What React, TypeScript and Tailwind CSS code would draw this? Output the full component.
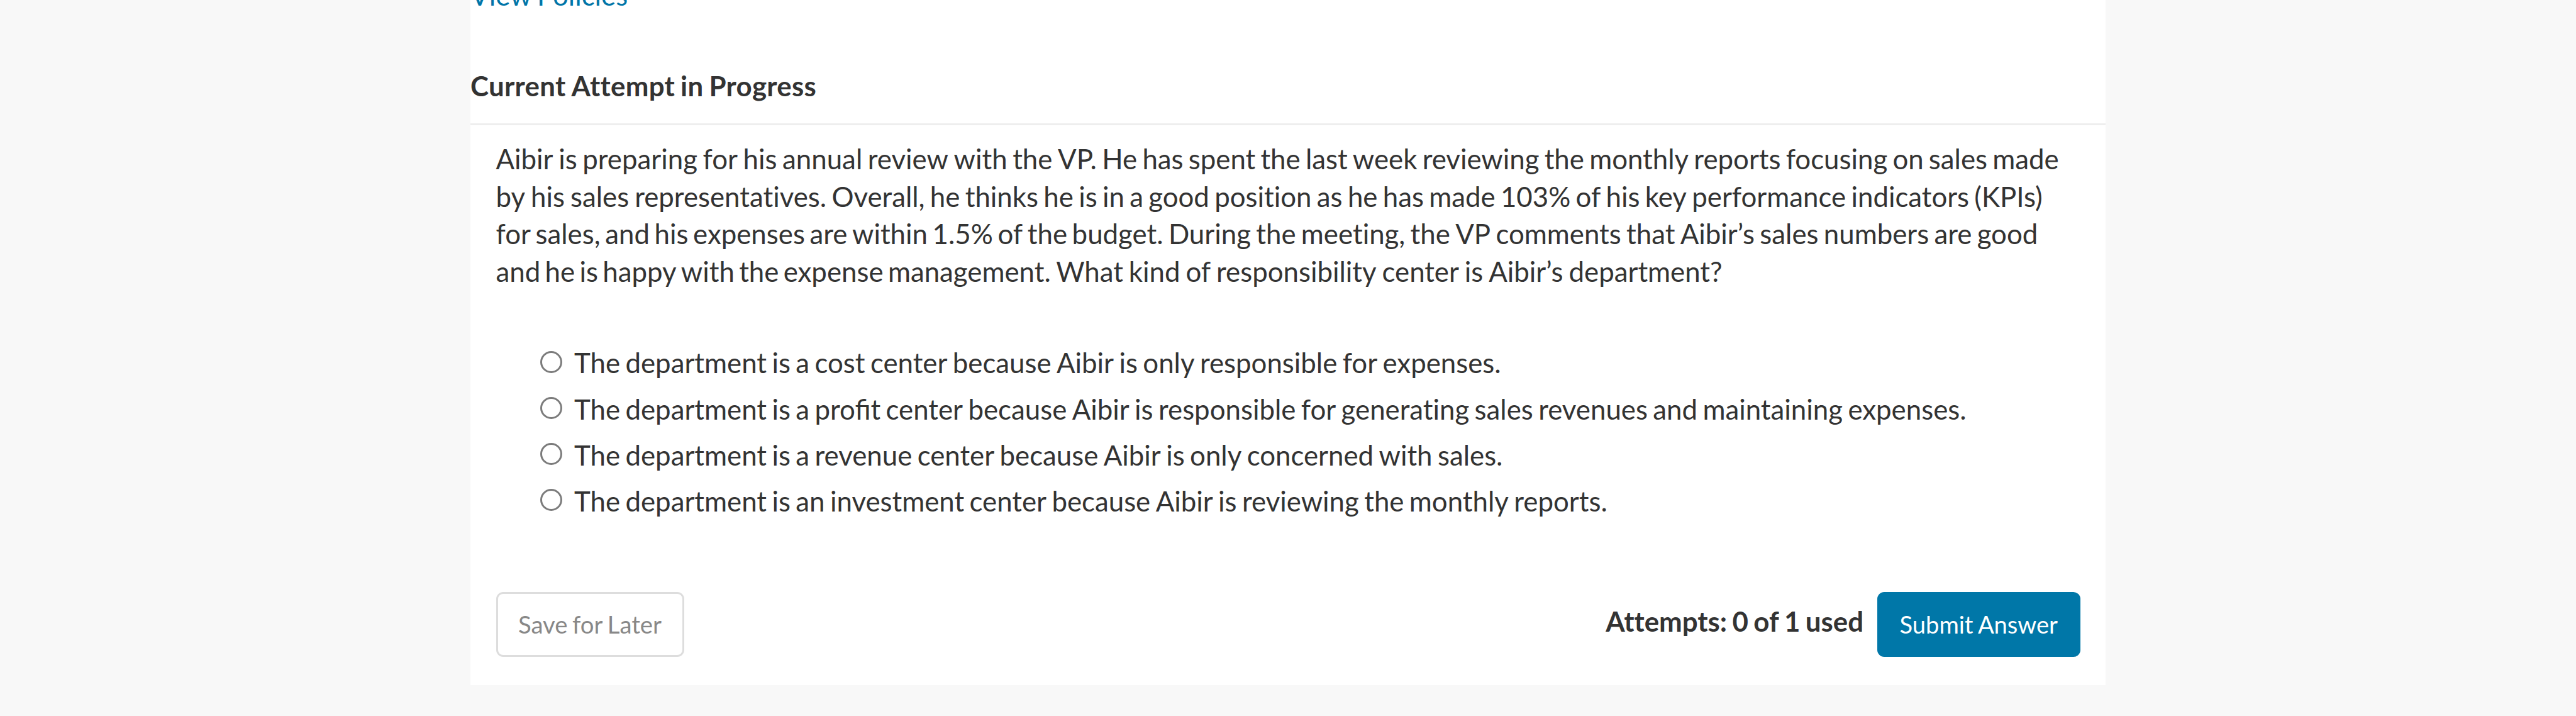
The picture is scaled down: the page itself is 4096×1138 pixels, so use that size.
import clsx from "clsx";

const paragraph = [
  [
    { text: "Aibir is preparing for his annual review with the VP.", gap: "gap-[8.6px]" },
    { text: "He has spent the last week reviewing the monthly reports focusing on sales made", gap: "gap-[8.2px]" },
  ],
  [
    { text: "by his sales representatives.", gap: "gap-[9px]" },
    { text: "Overall, he thinks he is in a good position as he has made 103% of his key performance indicators (KPIs)", gap: "gap-[8.3px]" },
  ],
  [
    { text: "for sales, and his expenses are within 1.5% of the budget.", gap: "gap-[7.6px]" },
    { text: "During the meeting, the VP comments that Aibir’s sales numbers are good", gap: "gap-[8.3px]" },
  ],
  [
    { text: "and he is happy with the expense management.", gap: "gap-[7.3px]" },
    { text: "What kind of responsibility center is Aibir’s department?", gap: "gap-[8.9px]" },
  ],
];

const options = [
  "The department is a cost center because Aibir is only responsible for expenses.",
  "The department is a profit center because Aibir is responsible for generating sales revenues and maintaining expenses.",
  "The department is a revenue center because Aibir is only concerned with sales.",
  "The department is an investment center because Aibir is reviewing the monthly reports.",
];

function Words({ text, gap = "gap-[8.4px]" }: { text: string; gap?: string }) {
  return (
    <span className={clsx("flex", gap)}>
      {text.split(" ").map((word, i) => (
        <span
          key={i}
          className={clsx(word === "profit" && "[font-variant-ligatures:normal]")}
        >
          {word}
        </span>
      ))}
    </span>
  );
}

export default function App() {
  return (
    <div className="flex h-[1138px] w-[4096px] justify-center overflow-hidden bg-[#f8f8f8] font-[Lato,sans-serif] text-[43.8px] leading-[60px] whitespace-nowrap text-[#333333] [font-variant-ligatures:none]">
      <main className="h-[1089px] w-[2600px] bg-white">
        <a href="#" className="-mt-[38px] block h-[60px] text-[#0075a8]">
          <Words text="View Policies" />
        </a>
        <h2 className="flex h-[177px] items-end border-b-[3px] border-[#eeeeee] pb-[30px] font-bold tracking-[0.3px]">
          <Words text="Current Attempt in Progress" gap="gap-[9px]" />
        </h2>
        <div className="px-[40.5px] pt-[24px]">
          <div className="leading-[59.7px]">
            {paragraph.map((line, i) => (
              <p key={i} className="flex gap-[8.4px]">
                {line.map((sentence) => (
                  <Words key={sentence.text} {...sentence} />
                ))}
              </p>
            ))}
          </div>
          <div className="mt-[78px] pl-[70.5px]">
            {options.map((option) => (
              <label key={option} className="flex h-[73.15px] items-center">
                <input
                  type="radio"
                  name="answer"
                  className="mr-[19px] mb-[2px] size-[35px] appearance-none rounded-full border-[3px] border-[#7c7c7c] checked:border-[10px]"
                />
                <Words text={option} />
              </label>
            ))}
          </div>
          <div className="mt-[109px] flex h-[103px] justify-between">
            <button className="flex w-[299px] items-center justify-center rounded-[11px] border-[3px] border-[#dddddd] pb-[2px] text-[38.3px] text-[#888888]">
              <Words text="Save for Later" gap="gap-[7.4px]" />
            </button>
            <div className="flex">
              <span className="mt-[16px] mr-[22px] font-bold">
                <Words text="Attempts: 0 of 1 used" />
              </span>
              <button className="flex w-[322.5px] items-center justify-center rounded-[11px] bg-[#0077a8] pb-[2px] text-[38.1px] text-white">
                <Words text="Submit Answer" gap="gap-[7.4px]" />
              </button>
            </div>
          </div>
        </div>
      </main>
    </div>
  );
}
